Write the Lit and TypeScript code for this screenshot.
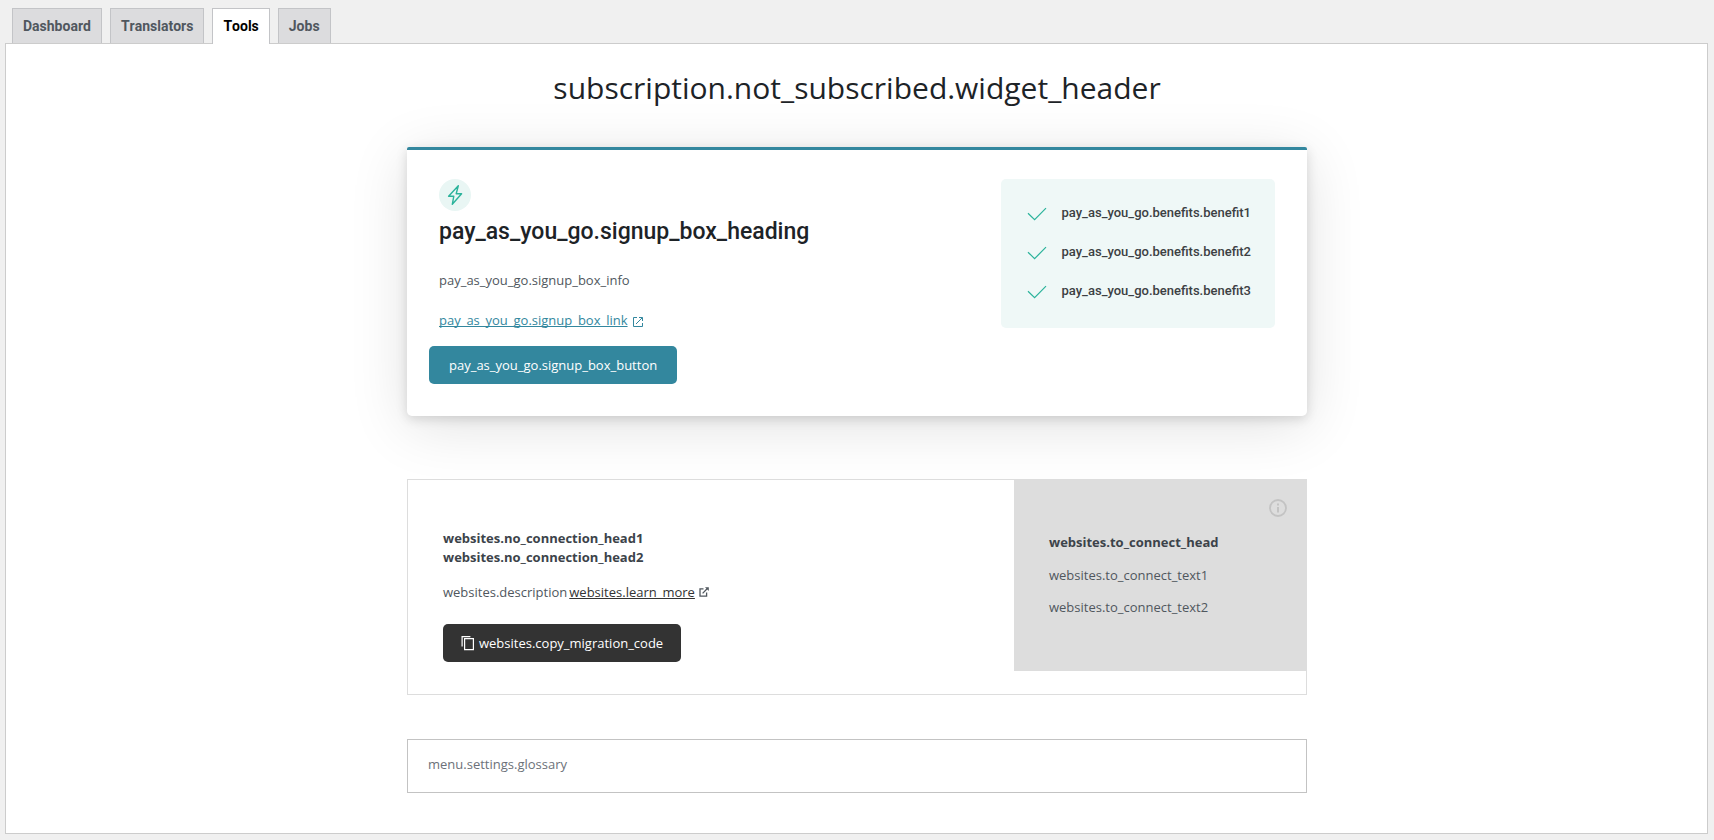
import { LitElement, html, css } from "lit";
import { customElement, state } from "lit/decorators.js";

@customElement("pay-as-you-go-card")
class PayAsYouGoCard extends LitElement {
  static styles = css`
    :host {
      display: block;
    }
    .card {
      display: flex;
      justify-content: space-between;
      align-items: flex-start;
      gap: 32px;
      padding: 29px 32px 32px;
      border-top: 3px solid #33879e;
      border-radius: 2px 2px 5px 5px;
      background: #fff;
      box-shadow: 0 3px 12px rgba(0, 0, 0, 0.14), 0 10px 60px rgba(0, 0, 0, 0.12);
    }
    .badge {
      display: flex;
      align-items: center;
      justify-content: center;
      width: 32px;
      height: 32px;
      border-radius: 50%;
      background: #e9f6f4;
    }
    .heading {
      margin: 0;
      font: 500 23px/42px Roboto, sans-serif;
      color: #1d2327;
    }
    .info {
      margin: 17px 0 20px;
    }
    .link {
      color: #33879e;
      text-decoration-skip-ink: none;
    }
    .linkrow {
      display: flex;
      align-items: center;
      gap: 4px;
      margin: 0 0 16px;
    }
    .linkrow svg {
      margin-top: 4px;
    }
    .button {
      margin: 0 0 0 -10px;
      padding: 9px 20px;
      border: 0;
      border-radius: 5px;
      background: #33879e;
      color: #fff;
      font: inherit;
      cursor: pointer;
    }
    .benefits {
      display: grid;
      gap: 19px;
      margin: 0;
      padding: 24px 24px 27px;
      list-style: none;
      border-radius: 5px;
      background: #eff8f7;
      color: #3c4043;
      font: 500 13px/20px Roboto, sans-serif;
    }
    .benefit {
      display: flex;
      align-items: center;
      gap: 13px;
    }
  `;

  render() {
    return html`
      <section class="card">
        <div>
          <div class="badge">
            <svg width="24" height="24" viewBox="0 0 24 24" fill="none" stroke="#2bb39b" stroke-width="1.4" stroke-linejoin="round">
              <path d="M15.3 2.8 5.6 13.2h5.2L9.3 21.3 18.6 10.7h-5.4z" />
            </svg>
          </div>
          <h2 class="heading">pay_as_you_go.signup_box_heading</h2>
          <p class="info">pay_as_you_go.signup_box_info</p>
          <p class="linkrow">
            <a class="link" href="#signup">pay_as_you_go.signup_box_link</a>
            <svg width="12" height="12" viewBox="0 0 12 12" fill="none" stroke="#33879e" stroke-width="1">
              <path d="M5 1.5H1.5v9h9V7M7 1.5h3.5V5M10.3 1.7 4 8" />
            </svg>
          </p>
          <button class="button" type="button">pay_as_you_go.signup_box_button</button>
        </div>
        <ul class="benefits">
          ${[1, 2, 3].map(
            (n) => html`<li class="benefit">
              <svg width="24" height="20" viewBox="0 0 24 20" fill="none" stroke="#2bb39b" stroke-width="1.2">
                <path d="M3 10.2 9.6 16.6 21 5.2" />
              </svg>
              <span>pay_as_you_go.benefits.benefit${n}</span>
            </li>`
          )}
        </ul>
      </section>
    `;
  }
}

@customElement("websites-card")
class WebsitesCard extends LitElement {
  static styles = css`
    :host {
      display: block;
    }
    .card {
      display: grid;
      grid-template-columns: minmax(0, 1fr) 292px;
      align-items: start;
      border: 1px solid #ddd;
      background: #fff;
    }
    .main {
      padding: 49px 35px 32px;
    }
    .heading {
      margin: 0;
      color: #3c434a;
      font-size: 13px;
      font-weight: 700;
      line-height: 19px;
    }
    .description {
      display: flex;
      align-items: center;
      margin: 15px 0 22px;
    }
    .learn {
      margin: 0 4px 0 2px;
      color: #333;
      text-decoration-skip-ink: none;
    }
    .button {
      display: flex;
      align-items: center;
      gap: 4px;
      padding: 9px 18px;
      border: 0;
      border-radius: 5px;
      background: #333;
      color: #fff;
      font: inherit;
      cursor: pointer;
    }
    .aside {
      padding: 19px 19px 42px 35px;
      background: #ddd;
    }
    .icon {
      display: block;
      margin-left: auto;
    }
    .asidehead {
      margin: 16px 0 13px;
    }
    .text {
      margin: 0 0 12px;
    }
  `;

  render() {
    return html`
      <section class="card">
        <div class="main">
          <h3 class="heading">websites.no_connection_head1<br />websites.no_connection_head2</h3>
          <p class="description">
            <span>websites.description</span>
            <a class="learn" href="#learn">websites.learn_more</a>
            <svg width="10" height="10" viewBox="0 0 10 10" fill="none" stroke="#50575e" stroke-width="1.3">
              <path d="M4.5 1.9H1v7.3h6.6V5.6M3.6 6.4 8.6 1.3" />
              <path d="M6 .2h3.8V4z" fill="#50575e" stroke="none" />
            </svg>
          </p>
          <button class="button" type="button">
            <svg width="14" height="16" viewBox="0 0 14 16" fill="none" stroke="#fff" stroke-width="1.2">
              <path d="M1.1 11.5V1.6h8.3" />
              <path d="M3.6 3.6h8.8v11H3.6z" />
            </svg>
            <span>websites.copy_migration_code</span>
          </button>
        </div>
        <aside class="aside">
          <svg class="icon" width="18" height="18" viewBox="0 0 18 18" fill="none" stroke="#c3c3c3">
            <circle cx="9" cy="9" r="8" stroke-width="1.8" />
            <path d="M9 8v5.5M9 4.4v2" stroke-width="2" />
          </svg>
          <h3 class="heading asidehead">websites.to_connect_head</h3>
          <p class="text">websites.to_connect_text1</p>
          <p class="text">websites.to_connect_text2</p>
        </aside>
      </section>
    `;
  }
}

@customElement("app-root")
class AppRoot extends LitElement {
  static styles = css`
    :host {
      display: flex;
      flex-direction: column;
      box-sizing: border-box;
      min-height: 100vh;
      padding: 8px 6px 6px 5px;
      background: #f0f0f0;
      color: #50575e;
      font: 13px/20px "Open Sans", sans-serif;
    }
    .tabs {
      display: flex;
      gap: 8px;
      padding: 0 7px;
    }
    .tab {
      padding: 6px 10px 5px;
      border: 1px solid #c3c4c7;
      border-bottom: 0;
      background: #dcdcde;
      color: #50575e;
      font: 700 14px/23px Roboto, sans-serif;
      font-kerning: none;
      text-decoration: none;
    }
    .tab.active {
      position: relative;
      margin-bottom: -1px;
      padding-bottom: 6px;
      background: #fff;
      color: #000;
    }
    .panel {
      flex: 1;
      padding: 20px 19px 40px 20px;
      border: 1px solid #ccc;
      background: #fff;
    }
    .title {
      margin: 0 0 35px;
      color: #1d2327;
      font-size: 30px;
      font-weight: 400;
      line-height: 48px;
      text-align: center;
    }
    .content {
      max-width: 900px;
      margin: 0 auto;
    }
    .websites {
      margin: 63px 0 44px;
    }
    .glossary {
      display: block;
      padding: 14px 20px 18px;
      border: 1px solid #c3c3c3;
      color: #6c7179;
      text-decoration: none;
    }
  `;

  @state() private active = "Tools";

  render() {
    return html`
      <nav class="tabs">
        ${["Dashboard", "Translators", "Tools", "Jobs"].map(
          (t) => html`<a
            class="tab ${t === this.active ? "active" : ""}"
            href="#${t.toLowerCase()}"
            @click=${() => (this.active = t)}
            >${t}</a
          >`
        )}
      </nav>
      <main class="panel">
        <h1 class="title">subscription.not_subscribed.widget_header</h1>
        <div class="content">
          <pay-as-you-go-card></pay-as-you-go-card>
          <websites-card class="websites"></websites-card>
          <a class="glossary" href="#glossary">menu.settings.glossary</a>
        </div>
      </main>
    `;
  }
}
